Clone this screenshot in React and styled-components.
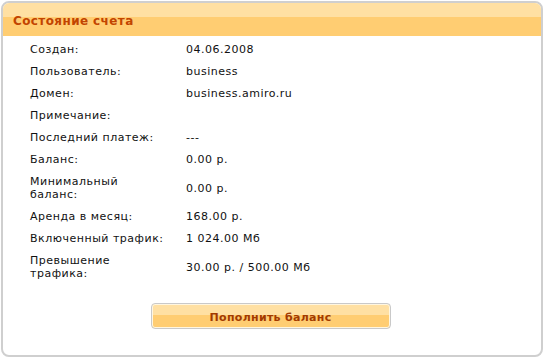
import React from 'react';
import styled, { createGlobalStyle } from 'styled-components';

const GlobalStyle = createGlobalStyle`
  html, body {
    margin: 0;
    padding: 0;
    background: #ffffff;
  }
  body {
    font-family: 'DejaVu Sans', Tahoma, sans-serif;
  }
`;

const Panel = styled.div`
  width: 542px;
  height: 356px;
  margin: 1px 0 0 1px;
  box-sizing: border-box;
  border: 2px solid #cfcfcf;
  border-radius: 8px;
  overflow: hidden;
  background: white;
  display: flex;
  flex-direction: column;
`;

const Header = styled.div`
  height: 33px;
  padding-left: 10px;
  background: linear-gradient(to bottom, #ffe0a3 0px, #ffe0a3 14px, #ffcd72 14px, #ffcd72 100%);
  display: flex;
  align-items: center;
  padding-top: 3px;
  box-sizing: border-box;
`;

const Title = styled.div`
  color: #c24400;
  font-size: 12px;
  font-weight: bold;
  letter-spacing: 0.4px;
  font-family: 'DejaVu Sans', Tahoma, sans-serif;
`;

const Table = styled.div`
  padding: 3px 0 0 27px;
  display: flex;
  flex-direction: column;
`;

const Row = styled.div`
  display: grid;
  grid-template-columns: 156px 1fr;
  align-items: center;
  padding: 4px 0 5px;
`;

const Cell = styled.div`
  color: #111111;
  font-size: 11px;
  line-height: 13px;
  letter-spacing: 0.5px;
`;

const Footer = styled.div`
  display: flex;
  justify-content: center;
  padding: 18px 3px 0 0;
`;

const Button = styled.button`
  width: 240px;
  height: 26px;
  box-sizing: border-box;
  border: 1px solid #c9c9c9;
  border-radius: 4px;
  box-shadow: inset 0 0 0 1px #fff6e0;
  background: linear-gradient(to bottom, #ffe0a3 0px, #ffe0a3 11px, #ffcd72 11px, #ffcd72 100%);
  color: #a33a00;
  font-family: 'DejaVu Sans', Tahoma, sans-serif;
  font-size: 11px;
  font-weight: bold;
  letter-spacing: 0.3px;
  padding: 2px 0 0;
  cursor: pointer;
`;

const rows = [
  ['Создан:', '04.06.2008'],
  ['Пользователь:', 'business'],
  ['Домен:', 'business.amiro.ru'],
  ['Примечание:', ''],
  ['Последний платеж:', '---'],
  ['Баланс:', '0.00 р.'],
  [['Минимальный', 'баланс:'], '0.00 р.'],
  ['Аренда в месяц:', '168.00 р.'],
  ['Включенный трафик:', '1 024.00 Мб'],
  [['Превышение', 'трафика:'], '30.00 р. / 500.00 Мб'],
];

const App = () => (
  <>
    <GlobalStyle />
    <Panel>
      <Header>
        <Title>Состояние счета</Title>
      </Header>
      <Table>
        {rows.map(([label, value], i) => (
          <Row key={i}>
            <Cell>
              {Array.isArray(label)
                ? label.map((line, j) => <div key={j}>{line}</div>)
                : label}
            </Cell>
            <Cell>{value || '\u00a0'}</Cell>
          </Row>
        ))}
      </Table>
      <Footer>
        <Button>Пополнить баланс</Button>
      </Footer>
    </Panel>
  </>
);

export default App;
